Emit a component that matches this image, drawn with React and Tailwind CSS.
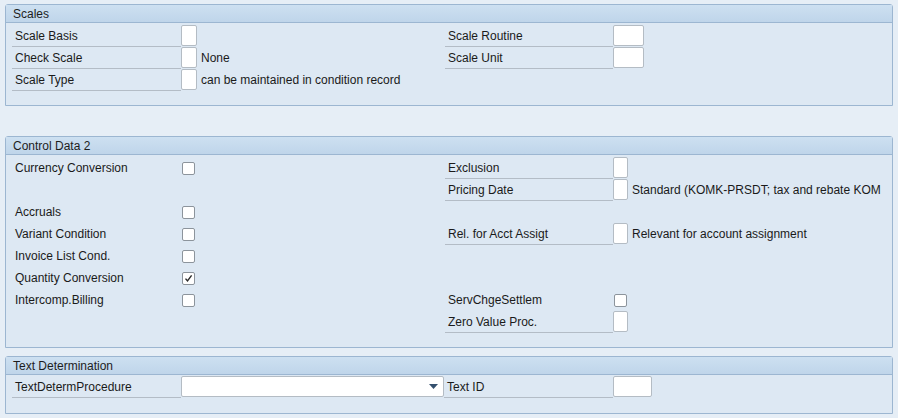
import React from "react";

const font = { fontFamily: '"Liberation Sans", Arial, sans-serif' };

function Panel({ title, className = "", bodyClass = "", children }) {
  return (
    <div className={"mx-[5px] border border-[#9cb6d1] rounded-t-[3px] bg-[#dde8f3] " + className}>
      <div className="h-[18px] bg-gradient-to-b from-[#cde0f1] to-[#bfd5ea] border-b border-[#9cb6d1] pl-[7px] text-[12px] leading-[18px] text-[#1d1d1d]">
        {title}
      </div>
      <div className={"pl-[6px] " + bodyClass}>{children}</div>
    </div>
  );
}

function Label({ children, w = "w-[169px]", underline = true, lh = "leading-[22px]" }) {
  return (
    <div
      className={
        w +
        " h-[22px] pl-[3px] text-[12px] text-[#1a1a1a] whitespace-nowrap " +
        lh +
        " " +
        (underline ? "border-b border-[#b3bcc6]" : "")
      }
    >
      {children}
    </div>
  );
}

function Input({ w = "w-[16px]" }) {
  return <div className={w + " h-[21px] bg-white border border-[#b4bcc4] rounded-[2px]"} />;
}

function Checkbox({ checked }) {
  return (
    <div className="ml-[1px] w-[13px] h-[13px] bg-white border border-[#8c949c] rounded-[2px] flex items-center justify-center">
      {checked && (
        <svg width="9" height="9" viewBox="0 0 9 9">
          <path d="M1.5 4.6 L3.5 6.8 L7.6 1.4" fill="none" stroke="#2a2a2a" strokeWidth="1.4" />
        </svg>
      )}
    </div>
  );
}

function FieldRow({ label, input, desc, lw }) {
  return (
    <div className="flex items-start h-[22px]">
      <Label w={lw}>{label}</Label>
      {input}
      {desc && <div className="pl-[4px] text-[12px] leading-[22px] text-[#1a1a1a] whitespace-nowrap">{desc}</div>}
    </div>
  );
}

function CheckRow({ label, checked }) {
  return (
    <div className="flex items-center h-[22px]">
      <Label underline={false} lh="leading-[23px]">{label}</Label>
      <Checkbox checked={checked} />
    </div>
  );
}

function Empty() {
  return <div className="h-[22px]" />;
}

export default function App() {
  return (
    <div style={font} className="w-[898px] h-[418px] bg-[#e6eef6] pt-[4px] overflow-hidden">
      <Panel title="Scales" bodyClass="pt-[2px] pb-[14px]">
        <div className="flex">
          <div className="w-[433px]">
            <FieldRow label="Scale Basis" input={<Input />} />
            <FieldRow label="Check Scale" input={<Input />} desc="None" />
            <FieldRow label="Scale Type" input={<Input />} desc="can be maintained in condition record" />
          </div>
          <div>
            <FieldRow label="Scale Routine" lw="w-[168px]" input={<Input w="w-[31px]" />} />
            <FieldRow label="Scale Unit" lw="w-[168px]" input={<Input w="w-[31px]" />} />
          </div>
        </div>
      </Panel>

      <Panel title="Control Data 2" className="mt-[30px]" bodyClass="pt-[2px] pb-[14px]">
        <div className="flex">
          <div className="w-[433px]">
            <CheckRow label="Currency Conversion" />
            <Empty />
            <CheckRow label="Accruals" />
            <CheckRow label="Variant Condition" />
            <CheckRow label="Invoice List Cond." />
            <CheckRow label="Quantity Conversion" checked />
            <CheckRow label="Intercomp.Billing" />
          </div>
          <div>
            <FieldRow label="Exclusion" lw="w-[168px]" input={<Input w="w-[15px]" />} />
            <FieldRow
              label="Pricing Date"
              lw="w-[168px]"
              input={<Input w="w-[15px]" />}
              desc="Standard (KOMK-PRSDT; tax and rebate KOM"
            />
            <Empty />
            <FieldRow
              label="Rel. for Acct Assigt"
              lw="w-[168px]"
              input={<Input w="w-[15px]" />}
              desc="Relevant for account assignment"
            />
            <Empty />
            <Empty />
            <div className="flex items-center h-[22px]">
              <div className="w-[168px] h-[22px] pl-[3px] text-[12px] leading-[23px] text-[#1a1a1a]">ServChgeSettlem</div>
              <Checkbox />
            </div>
            <FieldRow label="Zero Value Proc." lw="w-[168px]" input={<Input w="w-[15px]" />} />
          </div>
        </div>
      </Panel>

      <Panel title="Text Determination" className="mt-[8px]" bodyClass="pt-[1px] pb-[15px]">
        <div className="flex items-start h-[22px]">
          <Label>TextDetermProcedure</Label>
          <div className="w-[263px] h-[21px] bg-white border border-[#b4bcc4] rounded-[2px] flex items-center justify-end pr-[5px]">
            <svg width="9" height="5" viewBox="0 0 9 5">
              <path d="M0 0 H9 L4.5 5 Z" fill="#34506e" />
            </svg>
          </div>
          <Label w="w-[169px]">Text ID</Label>
          <Input w="w-[39px]" />
        </div>
      </Panel>
    </div>
  );
}
